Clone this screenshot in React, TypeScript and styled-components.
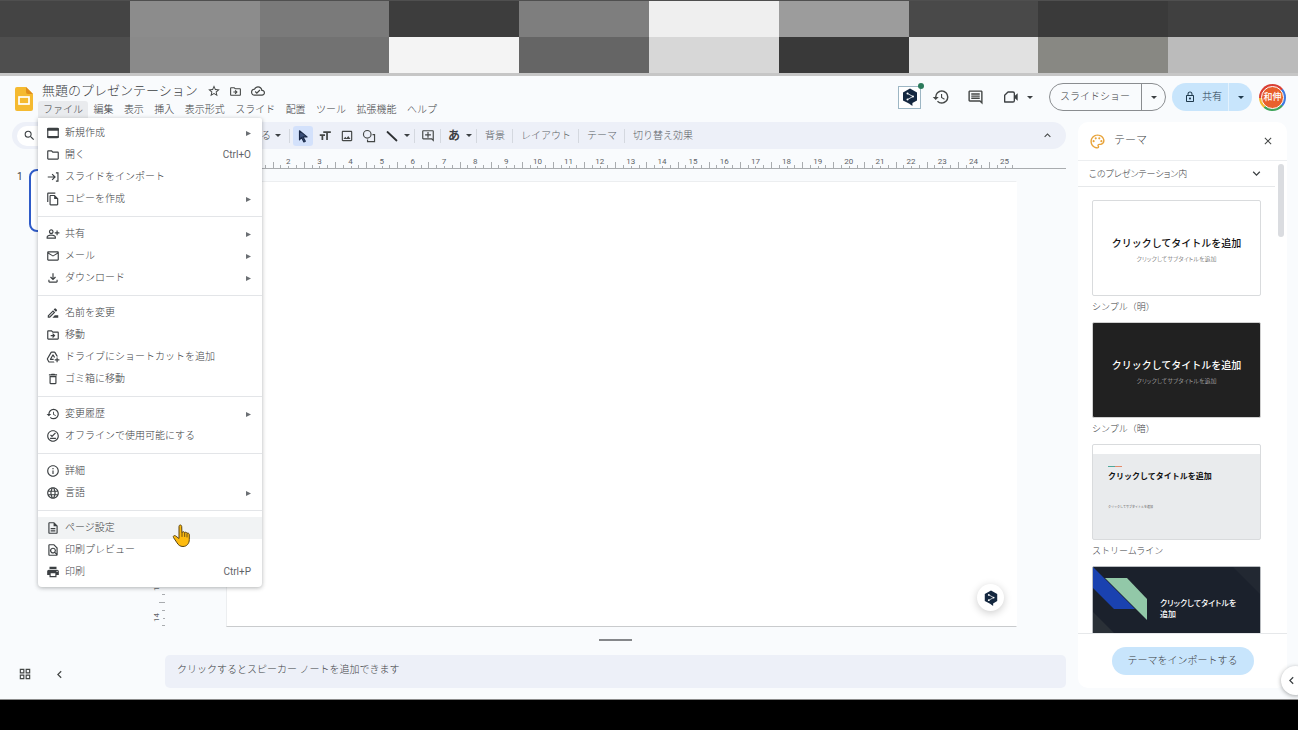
import React from "react";
import styled, { createGlobalStyle, css } from "styled-components";
import {
  MdAddToDrive,
  MdChevronLeft,
  MdClose,
  MdFormatSize,
  MdHistory,
  MdKeyboardArrowDown,
  MdKeyboardArrowUp,
  MdLanguage,
  MdMailOutline,
  MdOutlineAddComment,
  MdOutlineCloudDone,
  MdOutlineComment,
  MdOutlineDelete,
  MdOutlineDescription,
  MdOutlineDriveFileMove,
  MdOutlineDriveFileRenameOutline,
  MdOutlineFileCopy,
  MdOutlineFileDownload,
  MdOutlineFindInPage,
  MdOutlineFolder,
  MdOutlineGridView,
  MdOutlineImage,
  MdOutlineInfo,
  MdOutlineLock,
  MdOutlineOfflinePin,
  MdOutlinePalette,
  MdOutlinePersonAddAlt,
  MdPrint,
  MdSearch,
  MdStarOutline,
} from "react-icons/md";

const GlobalStyle = createGlobalStyle`
  *, *::before, *::after { box-sizing: border-box; }
  body {
    margin: 0;
    background: #000;
    color: #3c4043;
    font-family: Roboto, "Noto Sans CJK JP", sans-serif;
    font-size: 10px;
    font-weight: 300;
    line-height: 16px;
  }
  button, input, textarea {
    font: inherit;
    color: inherit;
    border: 0;
    padding: 0;
    margin: 0;
    background: none;
  }
  button { cursor: pointer; white-space: nowrap; }
  ul { list-style: none; margin: 0; padding: 0; }
  h2, p { margin: 0; font: inherit; }
  svg { display: block; flex: none; }
`;

/* ---------- page ---------- */

const Page = styled.div`
  display: flex;
  flex-direction: column;
  min-height: 100vh;
  overflow: hidden;
`;

const Mosaic = styled.div`
  display: grid;
  grid-template-columns: repeat(10, 1fr);
  grid-template-rows: 36px 36px;
  border-top: 1px solid #4f4f4f;
  border-bottom: 3px solid #c6c6c6;
`;

const Tile = styled.span<{ $tone: string }>`
  background: ${(p) => p.$tone};
`;

const AppFrame = styled.div`
  position: relative;
  flex: 1;
  display: flex;
  flex-direction: column;
  background: #f9fbfd;
  border-bottom: 1px solid #8c8c8c;
`;

const BottomBar = styled.div`
  height: 30px;
  background: #000;
`;

/* ---------- header ---------- */

const Header = styled.header`
  position: relative;
  z-index: 2;
  display: flex;
  justify-content: space-between;
  height: 46px;
  padding: 5px 12px 0 14px;
`;

const Brand = styled.div`
  display: flex;
  gap: 4px;
`;

const LogoLink = styled.a`
  margin-top: 5px;
`;

const TitleRow = styled.div`
  display: flex;
  align-items: center;
  gap: 9px;
  height: 20px;
  padding-left: 4px;
`;

const TitleInput = styled.input`
  width: 156px;
  height: 20px;
  padding-bottom: 3px;
  font-size: 13px;
`;

const IconButton = styled.button<{ $size?: number; $active?: boolean }>`
  display: flex;
  align-items: center;
  justify-content: center;
  width: ${(p) => p.$size ?? 20}px;
  height: ${(p) => p.$size ?? 20}px;
  border-radius: 3px;
  color: #444746;
  background: ${(p) => (p.$active ? "#d3e1fb" : "transparent")};
`;

const MenuBar = styled.ul`
  display: flex;
  justify-content: space-between;
  width: 404px;
`;

const MenuBarItem = styled.li`
  position: relative;
`;

const MenuBarButton = styled.button<{ $open?: boolean }>`
  height: 17px;
  padding: 0 5px;
  border-radius: 3px 3px 0 0;
  background: ${(p) => (p.$open ? "#e9ebee" : "transparent")};
`;

const Dropdown = styled.ul`
  position: absolute;
  top: 100%;
  left: 0;
  width: 224px;
  padding: 4px 0;
  background: #fff;
  border-radius: 0 2px 4px 4px;
  box-shadow: 0 1px 4px rgba(60, 64, 67, 0.4);
`;

const MenuItem = styled.button<{ $hover?: boolean }>`
  display: grid;
  grid-template-columns: 14px 1fr auto;
  align-items: center;
  column-gap: 5px;
  width: 100%;
  height: 22px;
  padding: 0 11px 0 8px;
  text-align: left;
  background: ${(p) => (p.$hover ? "#f1f3f4" : "transparent")};

  svg { color: #3c4043; }
`;

const Shortcut = styled.span`
  color: #5f6368;
  font-weight: 400;
`;

const Separator = styled.li`
  height: 1px;
  margin: 6px 0;
  background: #e3e5e8;
`;

const HeaderTools = styled.div`
  display: flex;
  align-items: center;
  height: 32px;
  gap: 6px;
`;

const ToolCluster = styled.div`
  display: flex;
  align-items: center;
  gap: 12px;
  margin-right: 10px;
`;

const ExtensionButton = styled.button`
  position: relative;
  display: flex;
  align-items: center;
  justify-content: center;
  width: 23px;
  height: 23px;
  border: 1px solid #9db6c4;
  background: #fff;

  &::after {
    content: "";
    position: absolute;
    top: -4px;
    right: -4px;
    width: 6px;
    height: 6px;
    border-radius: 50%;
    background: #2b7a5b;
  }
`;

const CallButton = styled.button`
  display: flex;
  align-items: center;
  gap: 8px;
  height: 22px;
  padding-left: 2px;
`;

const SplitButton = styled.div<{ $filled?: boolean }>`
  display: flex;
  height: 28px;
  border-radius: 14px;
  overflow: hidden;
  ${(p) =>
    p.$filled
      ? css`
          background: #c8e5fc;
          color: #1f3a4d;
        `
      : css`
          border: 1px solid #8a8d90;
        `}
`;

const SplitMain = styled.button`
  display: flex;
  align-items: center;
  gap: 6px;
  padding: 0 6px 0 12px;
`;

const SlideshowMain = styled(SplitMain)`
  padding: 0 11px 0 10px;
`;

const SplitCaret = styled.button<{ $line: string }>`
  display: flex;
  align-items: center;
  justify-content: center;
  width: 24px;
  border-left: 1px solid ${(p) => p.$line};
`;

const AvatarRing = styled.button`
  display: flex;
  align-items: center;
  justify-content: center;
  width: 27px;
  height: 27px;
  margin-left: 1px;
  border-radius: 50%;
  background: conic-gradient(from -40deg, #d93f34 0 90deg, #3f7ae0 90deg 170deg, #3fa55b 170deg 260deg, #f2b92f 260deg 310deg, #d93f34 310deg);
`;

const AvatarFace = styled.span`
  width: 23px;
  height: 23px;
  border: 1px solid #fff;
  border-radius: 50%;
  background: #e8602c;
  color: #fff;
  font-size: 9px;
  font-weight: 500;
  line-height: 21px;
`;

/* ---------- body ---------- */

const Body = styled.div`
  flex: 1;
  display: flex;
  gap: 12px;
  padding: 0 11px 11px 0;
`;

const Editor = styled.main`
  flex: 1;
  min-width: 0;
  display: flex;
  flex-direction: column;
`;

const Toolbar = styled.div`
  display: flex;
  align-items: center;
  justify-content: space-between;
  height: 27px;
  margin-left: 12px;
  padding: 0 9px 0 5px;
  border-radius: 14px;
  background: #edf0f8;
`;

const ToolGroup = styled.div`
  display: flex;
  align-items: center;
`;

const ToolbarStart = styled.div`
  display: flex;
  align-items: center;
  justify-content: space-between;
  width: 272px;
  padding-right: 4px;
`;

const SearchButton = styled.button`
  display: flex;
  align-items: center;
  gap: 6px;
  height: 20px;
  padding: 0 12px 0 6px;
  border-radius: 10px;
  background: #fff;
`;

const Divider = styled.span`
  width: 1px;
  height: 14px;
  background: #d4d8df;
`;

const Pair = styled.button`
  display: flex;
  align-items: center;
  gap: 6px;
  height: 20px;
  padding: 0 4px 0 7px;
`;

const ZoomButton = styled(Pair)`
  gap: 4px;
`;

const ToolIcons = styled.div`
  display: flex;
  gap: 2px;
  padding-left: 3px;
`;

const Glyph = styled.span`
  font-size: 12px;
  font-weight: 700;
`;

const TextTool = styled.button`
  height: 20px;
  padding: 0 7px 0 8px;
  color: #5b6065;
`;

const Work = styled.div`
  flex: 1;
  display: flex;
`;

const Filmstrip = styled.aside`
  display: flex;
  flex-direction: column;
  justify-content: space-between;
  width: 151px;
  padding-top: 20px;
`;

const FilmRow = styled.div`
  display: flex;
  gap: 6px;
  padding-left: 17px;
  font-weight: 400;
`;

const FilmThumb = styled.button`
  width: 112px;
  height: 63px;
  border: 2px solid #2f5bc8;
  border-radius: 8px;
  background: #fff;
`;

const FilmTools = styled.div`
  display: flex;
  gap: 14px;
  padding-left: 15px;
  height: 24px;
`;

const Stage = styled.section`
  flex: 1;
  min-width: 0;
  display: flex;
  flex-direction: column;
`;

const TopRuler = styled.div`
  height: 20px;
  margin-left: 14px;
  padding: 0 49px 0 61px;
  border-bottom: 1px solid #a9acaf;
`;

const TopScale = styled.div`
  display: grid;
  grid-template-columns: 5fr repeat(24, 10fr) 9fr;
  height: 100%;
`;

const RulerCell = styled.div`
  min-width: 0;
  min-height: 0;
`;

const Unit = styled.div<{ $axis: "x" | "y"; $span: string }>`
  display: grid;
  width: ${(p) => (p.$axis === "x" ? p.$span : "100%")};
  height: ${(p) => (p.$axis === "x" ? "100%" : p.$span)};
`;

const UnitLabel = styled.span<{ $axis: "x" | "y" }>`
  grid-area: 1 / 1;
  color: #5f6368;
  font-size: 8px;
  font-weight: 400;
  line-height: 8px;
  ${(p) =>
    p.$axis === "x"
      ? css`
          align-self: end;
          justify-self: center;
          margin-bottom: 2px;
        `
      : css`
          align-self: center;
          justify-self: start;
          margin-left: 2px;
          writing-mode: vertical-rl;
          transform: rotate(180deg);
        `}
`;

const Ticks = styled.div<{ $axis: "x" | "y" }>`
  grid-area: 1 / 1;
  display: flex;
  align-items: flex-end;
  flex-direction: ${(p) => (p.$axis === "x" ? "row" : "column")};
`;

const Tick = styled.span<{ $axis: "x" | "y"; $length: number }>`
  flex: 1;
  ${(p) =>
    p.$axis === "x"
      ? css`
          height: ${p.$length}px;
          border-left: 1px solid #a9acaf;
        `
      : css`
          width: ${p.$length}px;
          border-top: 1px solid #a9acaf;
        `}
`;

const CanvasRow = styled.div`
  flex: 1;
  display: flex;
  gap: 61px;
  padding: 12px 49px 0 0;
`;

const SideScale = styled.div`
  display: grid;
  grid-template-rows: 5fr repeat(13, 10fr) 8fr;
  width: 14px;
`;

const Slide = styled.div`
  position: relative;
  flex: 1;
  background: #fff;
  border: 1px solid #eceef0;
  border-right-color: #fff;
  border-bottom-color: #c9cbcd;
`;

const FloatingButton = styled.button`
  position: absolute;
  right: 12px;
  bottom: 15px;
  display: flex;
  align-items: center;
  justify-content: center;
  width: 27px;
  height: 27px;
  border-radius: 50%;
  background: #fff;
  box-shadow: 0 2px 8px rgba(0, 0, 0, 0.2);
`;

const ResizeHandle = styled.div`
  align-self: center;
  width: 33px;
  height: 2px;
  margin: 12px 0 14px 14px;
  background: #85878a;
`;

const Notes = styled.textarea`
  display: block;
  height: 33px;
  margin-left: 14px;
  padding: 7px 12px;
  border-radius: 5px;
  background: #edf0f8;
  resize: none;
  overflow: hidden;

  &::placeholder { color: #3c4043; opacity: 1; }
`;

/* ---------- theme panel ---------- */

const Panel = styled.aside`
  display: flex;
  flex-direction: column;
  width: 209px;
  border-radius: 10px;
  background: #fff;
`;

const PanelHeader = styled.header`
  display: grid;
  grid-template-columns: 16px 1fr 20px;
  align-items: center;
  column-gap: 9px;
  height: 39px;
  padding: 0 9px 0 11px;
  border-bottom: 1px solid #eceef0;

  > svg { color: #e8a33a; }
`;

const PanelTitle = styled.h2`
  font-size: 11px;
`;

const PanelBody = styled.div`
  flex: 1 1 0;
  min-height: 0;
  display: flex;
  overflow: hidden;
`;

const PanelContent = styled.div`
  flex: 1;
  min-width: 0;
`;

const SectionToggle = styled.button`
  display: flex;
  align-items: center;
  justify-content: space-between;
  width: 100%;
  height: 26px;
  padding: 0 11px;
  border-bottom: 1px solid #e6e8ea;
  font-size: 9px;
  font-feature-settings: "palt";
`;

const ThemeList = styled.ul`
  padding: 13px 14px 0;
`;

const ThemeItem = styled.li`
  height: 122px;
`;

const ThemeCard = styled.button<{ $bg: string; $line: string }>`
  display: flex;
  flex-direction: column;
  align-items: center;
  justify-content: center;
  width: 100%;
  height: 96px;
  padding-top: 5px;
  border: 1px solid ${(p) => p.$line};
  border-radius: 2px;
  background: ${(p) => p.$bg};
`;

const StreamCard = styled(ThemeCard)`
  align-items: flex-start;
  justify-content: flex-start;
  padding: 21px 15px;
`;

const Accent = styled.span`
  width: 14px;
  height: 1px;
  margin-bottom: 2px;
  background: linear-gradient(90deg, #4fa79b 50%, #e58a6a 50%);
`;

const FocusCard = styled(ThemeCard)`
  display: grid;
  grid-template-columns: 67px 1fr;
  align-items: start;
  justify-items: start;
  padding-top: 0;
  overflow: hidden;
  text-align: left;
  white-space: normal;
`;

const CardTitle = styled.span<{ $color: string; $size?: number; $weight?: number }>`
  color: ${(p) => p.$color};
  font-size: ${(p) => p.$size ?? 10}px;
  font-weight: ${(p) => p.$weight ?? 500};
  line-height: 16px;
`;

const FocusTitle = styled.span`
  padding: 31px 18px 0 0;
  color: #fff;
  font-size: 8px;
  font-feature-settings: "palt";
  font-weight: 500;
  line-height: 11px;
`;

const CardSub = styled.span<{ $color: string }>`
  color: ${(p) => p.$color};
  font-size: 6px;
  font-feature-settings: "palt";
  line-height: 14px;
`;

const StreamSub = styled.span`
  margin-top: 15px;
  color: #555;
  font-size: 3px;
  font-weight: 400;
  line-height: 14px;
`;

const ThemeName = styled.p`
  margin-top: 3px;
  font-size: 9px;
`;

const ScrollTrack = styled.div`
  width: 12px;
  padding: 3px 3px 0;
`;

const ScrollThumb = styled.div`
  height: 73px;
  border-radius: 3px;
  background: #dadce0;
`;

const PanelFooter = styled.footer`
  display: flex;
  justify-content: center;
  padding: 13px 0;
  border-top: 1px solid #e6e8ea;
`;

const ImportButton = styled.button`
  height: 28px;
  padding: 0 16px;
  border-radius: 14px;
  background: #c8e5fc;
`;

const SideToggle = styled.button`
  position: absolute;
  right: -12px;
  bottom: 4px;
  display: flex;
  align-items: center;
  width: 29px;
  height: 29px;
  padding-left: 3px;
  border-radius: 50%;
  background: #fff;
  box-shadow: 0 1px 4px rgba(60, 64, 67, 0.45);
`;

const Pointer = styled.li`
  position: absolute;
  right: 70px;
  bottom: 39px;
`;

/* ---------- drawings ---------- */

const Caret = () => (
  <svg width="6" height="3" viewBox="0 0 6 3" aria-hidden="true">
    <path d="M0 0h6L3 3z" fill="currentColor" />
  </svg>
);

const SubmenuArrow = () => (
  <svg width="5" height="5" viewBox="0 0 5 5" aria-hidden="true">
    <path d="M0 0l5 2.5L0 5z" fill="#6b6f73" />
  </svg>
);

const SlidesLogo = () => (
  <svg width="20" height="26" viewBox="0 0 20 26" aria-hidden="true">
    <path d="M3 1h9l7 7v15a2 2 0 0 1-2 2H3a2 2 0 0 1-2-2V3a2 2 0 0 1 2-2z" fill="#f5ba31" />
    <path d="M12 1l7 7h-5a2 2 0 0 1-2-2z" fill="#e08e1c" />
    <rect x="5" y="11" width="10" height="7" fill="none" stroke="#fff" strokeWidth="1.7" />
  </svg>
);

const HexLogo = ({ size }: { size: number }) => (
  <svg width={size} height={size} viewBox="0 0 18 18" aria-hidden="true">
    <path d="M9 0.5l7 4v8l-4.6 2.6V18l-3.4-2.6L2 12.500V4.500z" fill="#14273f" />
    <path d="M6.500 5.500l5.500 3-5.500 3" fill="none" stroke="#fff" strokeWidth="0.8" />
    <circle cx="6.500" cy="5.500" r="1" fill="#fff" />
    <circle cx="12" cy="8.500" r="1" fill="#fff" />
    <circle cx="6.500" cy="11.500" r="1" fill="#fff" />
  </svg>
);

const NewIcon = () => (
  <svg width="14" height="14" viewBox="0 0 24 24" aria-hidden="true">
    <rect x="3" y="4" width="18" height="16" rx="1.500" fill="none" stroke="currentColor" strokeWidth="2" />
    <path d="M2 4h20v4H2zM2 17h20v3H2z" fill="currentColor" />
  </svg>
);

const ImportIcon = () => (
  <svg width="14" height="14" viewBox="0 0 24 24" fill="none" stroke="currentColor" strokeWidth="2" aria-hidden="true">
    <path d="M3 12h12M10.500 7l5 5-5 5M17 5h3.500v14H17" />
  </svg>
);

const CursorIcon = () => (
  <svg width="14" height="14" viewBox="0 0 24 24" aria-hidden="true">
    <path d="M6 3l13 10.500h-7l4 7.500-2.500 1.200-4-7.700L6 18.500z" fill="#3a4f7a" stroke="#1b2a4a" strokeWidth="2" strokeLinejoin="round" />
  </svg>
);

const ShapesIcon = () => (
  <svg width="14" height="14" viewBox="0 0 24 24" fill="none" stroke="currentColor" strokeWidth="2" aria-hidden="true">
    <circle cx="9" cy="9" r="6.500" />
    <path d="M18 9.500h3.500v12h-12V18" />
  </svg>
);

const LineIcon = () => (
  <svg width="12" height="12" viewBox="0 0 12 12" aria-hidden="true">
    <path d="M1.500 2l9 8.500" stroke="#2d3033" strokeWidth="1.800" strokeLinecap="round" />
  </svg>
);

const CallIcon = () => (
  <svg width="16" height="16" viewBox="0 0 24 24" aria-hidden="true">
    <path d="M7.500 4.500H15a2 2 0 0 1 2 2v11a2 2 0 0 1-2 2H2.500V9.500z" fill="none" stroke="currentColor" strokeWidth="2" strokeLinejoin="round" />
    <path d="M17 11l5-4.500v11L17 13z" fill="currentColor" />
  </svg>
);

const HandIcon = () => (
  <svg width="20" height="24" viewBox="0 0 20 24" aria-hidden="true">
    <path
      d="M7 2.500c0-2 2.600-2 2.700 0l.2 6 .3-.1c.6-1 2-.9 2.500.2.8-.7 2-.4 2.300.7 1-.5 2.300 0 2.300 1.400v4.800c0 4-2.500 7-6.300 7-3 0-4.700-1.500-6-3.700L1.500 13.500c-.8-1.400.8-2.500 2-1.600L7 14.500z"
      fill="#fdbb0f"
      stroke="#5a4312"
      strokeWidth="1"
      strokeLinejoin="round"
    />
    <path d="M10 8.500v4M12.700 9v3.500M15 10v3" stroke="#5a4312" strokeWidth="0.900" strokeLinecap="round" />
  </svg>
);

const FocusArt = () => (
  <svg width="167" height="95" viewBox="0 0 167 95" aria-hidden="true">
    <path d="M0 45l50 50H0z" fill="#2a3037" />
    <path d="M140 0h27v27z" fill="#222832" />
    <path d="M0 0l42 42H21L0 21z" fill="#1a42b0" />
    <path d="M12 11h22l20 21v21z" fill="#92c8a8" />
  </svg>
);

/* ---------- data ---------- */

const TONES = [
  "#444", "#8c8c8c", "#7a7a7a", "#3d3d3d", "#7e7e7e", "#efefef", "#9c9c9c", "#494949", "#3a3a3a", "#404040",
  "#4e4e4e", "#8a8a8a", "#727272", "#f4f4f4", "#656565", "#d7d7d7", "#393939", "#e1e1e1", "#888883", "#bbb",
];

const MENUS = ["ファイル", "編集", "表示", "挿入", "表示形式", "スライド", "配置", "ツール", "拡張機能", "ヘルプ"];

interface Entry {
  icon: React.ReactNode;
  text: string;
  sub?: boolean;
  keys?: string;
  hover?: boolean;
}

const FILE_MENU: Entry[][] = [
  [
    { icon: <NewIcon />, text: "新規作成", sub: true },
    { icon: <MdOutlineFolder size={14} />, text: "開く", keys: "Ctrl+O" },
    { icon: <ImportIcon />, text: "スライドをインポート" },
    { icon: <MdOutlineFileCopy size={14} />, text: "コピーを作成", sub: true },
  ],
  [
    { icon: <MdOutlinePersonAddAlt size={14} />, text: "共有", sub: true },
    { icon: <MdMailOutline size={14} />, text: "メール", sub: true },
    { icon: <MdOutlineFileDownload size={14} />, text: "ダウンロード", sub: true },
  ],
  [
    { icon: <MdOutlineDriveFileRenameOutline size={14} />, text: "名前を変更" },
    { icon: <MdOutlineDriveFileMove size={14} />, text: "移動" },
    { icon: <MdAddToDrive size={14} />, text: "ドライブにショートカットを追加" },
    { icon: <MdOutlineDelete size={14} />, text: "ゴミ箱に移動" },
  ],
  [
    { icon: <MdHistory size={14} />, text: "変更履歴", sub: true },
    { icon: <MdOutlineOfflinePin size={14} />, text: "オフラインで使用可能にする" },
  ],
  [
    { icon: <MdOutlineInfo size={14} />, text: "詳細" },
    { icon: <MdLanguage size={14} />, text: "言語", sub: true },
  ],
  [
    { icon: <MdOutlineDescription size={14} />, text: "ページ設定", hover: true },
    { icon: <MdOutlineFindInPage size={14} />, text: "印刷プレビュー" },
    { icon: <MdPrint size={14} />, text: "印刷", keys: "Ctrl+P" },
  ],
];

const TICK_LENGTHS = [6, 3, 2, 3];

const RulerUnits = ({ axis, count, lastSpan }: { axis: "x" | "y"; count: number; lastSpan: string }) => (
  <>
    <RulerCell />
    {Array.from({ length: count }, (_, i) => (
      <RulerCell key={i}>
        <Unit $axis={axis} $span={i === count - 1 ? lastSpan : "100%"}>
          <UnitLabel $axis={axis}>{i + 1}</UnitLabel>
          <Ticks $axis={axis}>
            {TICK_LENGTHS.map((length, n) => (
              <Tick key={n} $axis={axis} $length={length} />
            ))}
          </Ticks>
        </Unit>
      </RulerCell>
    ))}
  </>
);

const FileMenu = () => (
  <Dropdown>
    {FILE_MENU.map((group, g) => (
      <React.Fragment key={g}>
        {g > 0 && <Separator role="separator" />}
        {group.map((entry) => (
          <li key={entry.text}>
            <MenuItem type="button" $hover={entry.hover}>
              {entry.icon}
              <span>{entry.text}</span>
              {entry.sub && <SubmenuArrow />}
              {entry.keys && <Shortcut>{entry.keys}</Shortcut>}
            </MenuItem>
          </li>
        ))}
      </React.Fragment>
    ))}
    <Pointer aria-hidden="true">
      <HandIcon />
    </Pointer>
  </Dropdown>
);

const TITLE = "クリックしてタイトルを追加";
const SUBTITLE = "クリックしてサブタイトルを追加";

export default function App() {
  return (
    <>
      <GlobalStyle />
      <Page>
        <Mosaic aria-hidden="true">
          {TONES.map((tone, i) => (
            <Tile key={i} $tone={tone} />
          ))}
        </Mosaic>

        <AppFrame>
          <Header>
            <Brand>
              <LogoLink href="#" aria-label="スライド ホーム">
                <SlidesLogo />
              </LogoLink>
              <div>
                <TitleRow>
                  <TitleInput aria-label="名前を変更" defaultValue="無題のプレゼンテーション" />
                  <IconButton $size={13} aria-label="スターを付ける"><MdStarOutline size={14} /></IconButton>
                  <IconButton $size={13} aria-label="移動"><MdOutlineDriveFileMove size={13} /></IconButton>
                  <IconButton $size={13} aria-label="保存状況"><MdOutlineCloudDone size={14} /></IconButton>
                </TitleRow>
                <MenuBar>
                  {MENUS.map((name, i) => (
                    <MenuBarItem key={name}>
                      <MenuBarButton type="button" $open={i === 0} aria-expanded={i === 0}>{name}</MenuBarButton>
                      {i === 0 && <FileMenu />}
                    </MenuBarItem>
                  ))}
                </MenuBar>
              </div>
            </Brand>

            <HeaderTools>
              <ToolCluster>
                <ExtensionButton aria-label="翻訳"><HexLogo size={18} /></ExtensionButton>
                <IconButton $size={16} aria-label="変更履歴"><MdHistory size={18} /></IconButton>
                <IconButton $size={28} aria-label="コメント"><MdOutlineComment size={17} /></IconButton>
                <CallButton aria-label="通話"><CallIcon /><Caret /></CallButton>
              </ToolCluster>
              <SplitButton>
                <SlideshowMain>スライドショー</SlideshowMain>
                <SplitCaret $line="#8a8d90" aria-label="スライドショーのオプション"><Caret /></SplitCaret>
              </SplitButton>
              <SplitButton $filled>
                <SplitMain><MdOutlineLock size={12} />共有</SplitMain>
                <SplitCaret $line="#e4f2fd" aria-label="共有オプション"><Caret /></SplitCaret>
              </SplitButton>
              <AvatarRing aria-label="アカウント"><AvatarFace>和伸</AvatarFace></AvatarRing>
            </HeaderTools>
          </Header>

          <Body>
            <Editor>
              <Toolbar>
                <ToolGroup>
                  <ToolbarStart>
                    <SearchButton aria-label="メニューを検索"><MdSearch size={13} /></SearchButton>
                    <ZoomButton aria-label="ズーム">合わせる<Caret /></ZoomButton>
                  </ToolbarStart>
                  <Divider />
                  <ToolIcons>
                    <IconButton $active aria-label="選択"><CursorIcon /></IconButton>
                    <IconButton aria-label="テキスト ボックス"><MdFormatSize size={14} /></IconButton>
                    <IconButton aria-label="画像"><MdOutlineImage size={14} /></IconButton>
                    <IconButton aria-label="図形"><ShapesIcon /></IconButton>
                  </ToolIcons>
                  <Pair aria-label="線"><LineIcon /><Caret /></Pair>
                  <Divider />
                  <IconButton $size={25} aria-label="コメントを追加"><MdOutlineAddComment size={14} /></IconButton>
                  <Divider />
                  <Pair aria-label="入力ツール"><Glyph>あ</Glyph><Caret /></Pair>
                  <Divider />
                  <TextTool>背景</TextTool>
                  <Divider />
                  <TextTool>レイアウト</TextTool>
                  <Divider />
                  <TextTool>テーマ</TextTool>
                  <Divider />
                  <TextTool>切り替え効果</TextTool>
                </ToolGroup>
                <IconButton aria-label="メニューを非表示"><MdKeyboardArrowUp size={13} /></IconButton>
              </Toolbar>

              <Work>
                <Filmstrip>
                  <FilmRow>
                    1
                    <FilmThumb aria-label="スライド 1" />
                  </FilmRow>
                  <FilmTools>
                    <IconButton aria-label="グリッド表示"><MdOutlineGridView size={14} /></IconButton>
                    <IconButton aria-label="フィルムストリップを非表示"><MdChevronLeft size={15} /></IconButton>
                  </FilmTools>
                </Filmstrip>

                <Stage>
                  <TopRuler aria-hidden="true">
                    <TopScale>
                      <RulerUnits axis="x" count={25} lastSpan="111%" />
                    </TopScale>
                  </TopRuler>
                  <CanvasRow>
                    <SideScale aria-hidden="true">
                      <RulerUnits axis="y" count={14} lastSpan="125%" />
                    </SideScale>
                    <Slide>
                      <FloatingButton aria-label="翻訳"><HexLogo size={16} /></FloatingButton>
                    </Slide>
                  </CanvasRow>
                  <ResizeHandle />
                  <Notes aria-label="スピーカー ノート" placeholder="クリックするとスピーカー ノートを追加できます" />
                </Stage>
              </Work>
            </Editor>

            <Panel>
              <PanelHeader>
                <MdOutlinePalette size={17} />
                <PanelTitle>テーマ</PanelTitle>
                <IconButton aria-label="閉じる"><MdClose size={12} /></IconButton>
              </PanelHeader>
              <PanelBody>
                <PanelContent>
                  <SectionToggle>
                    このプレゼンテーション内
                    <MdKeyboardArrowDown size={15} />
                  </SectionToggle>
                  <ThemeList>
                    <ThemeItem>
                      <ThemeCard $bg="#fff" $line="#d9dbdd">
                        <CardTitle $color="#111">{TITLE}</CardTitle>
                        <CardSub $color="#444">{SUBTITLE}</CardSub>
                      </ThemeCard>
                      <ThemeName>シンプル（明）</ThemeName>
                    </ThemeItem>
                    <ThemeItem>
                      <ThemeCard $bg="#212121" $line="#d0d0d0">
                        <CardTitle $color="#fff">{TITLE}</CardTitle>
                        <CardSub $color="#ccc">{SUBTITLE}</CardSub>
                      </ThemeCard>
                      <ThemeName>シンプル（暗）</ThemeName>
                    </ThemeItem>
                    <ThemeItem>
                      <StreamCard $bg="linear-gradient(#fff 9px, #e9ebed 9px)" $line="#d9dbdd">
                        <Accent />
                        <CardTitle $color="#111" $size={8} $weight={700}>{TITLE}</CardTitle>
                        <StreamSub>{SUBTITLE}</StreamSub>
                      </StreamCard>
                      <ThemeName>ストリームライン</ThemeName>
                    </ThemeItem>
                    <ThemeItem>
                      <FocusCard $bg="#1b212c" $line="#b9bcc0">
                        <FocusArt />
                        <FocusTitle>{TITLE}</FocusTitle>
                      </FocusCard>
                    </ThemeItem>
                  </ThemeList>
                </PanelContent>
                <ScrollTrack>
                  <ScrollThumb />
                </ScrollTrack>
              </PanelBody>
              <PanelFooter>
                <ImportButton>テーマをインポートする</ImportButton>
              </PanelFooter>
            </Panel>
          </Body>
          <SideToggle aria-label="サイドパネルを表示"><MdChevronLeft size={15} /></SideToggle>
        </AppFrame>
        <BottomBar />
      </Page>
    </>
  );
}
